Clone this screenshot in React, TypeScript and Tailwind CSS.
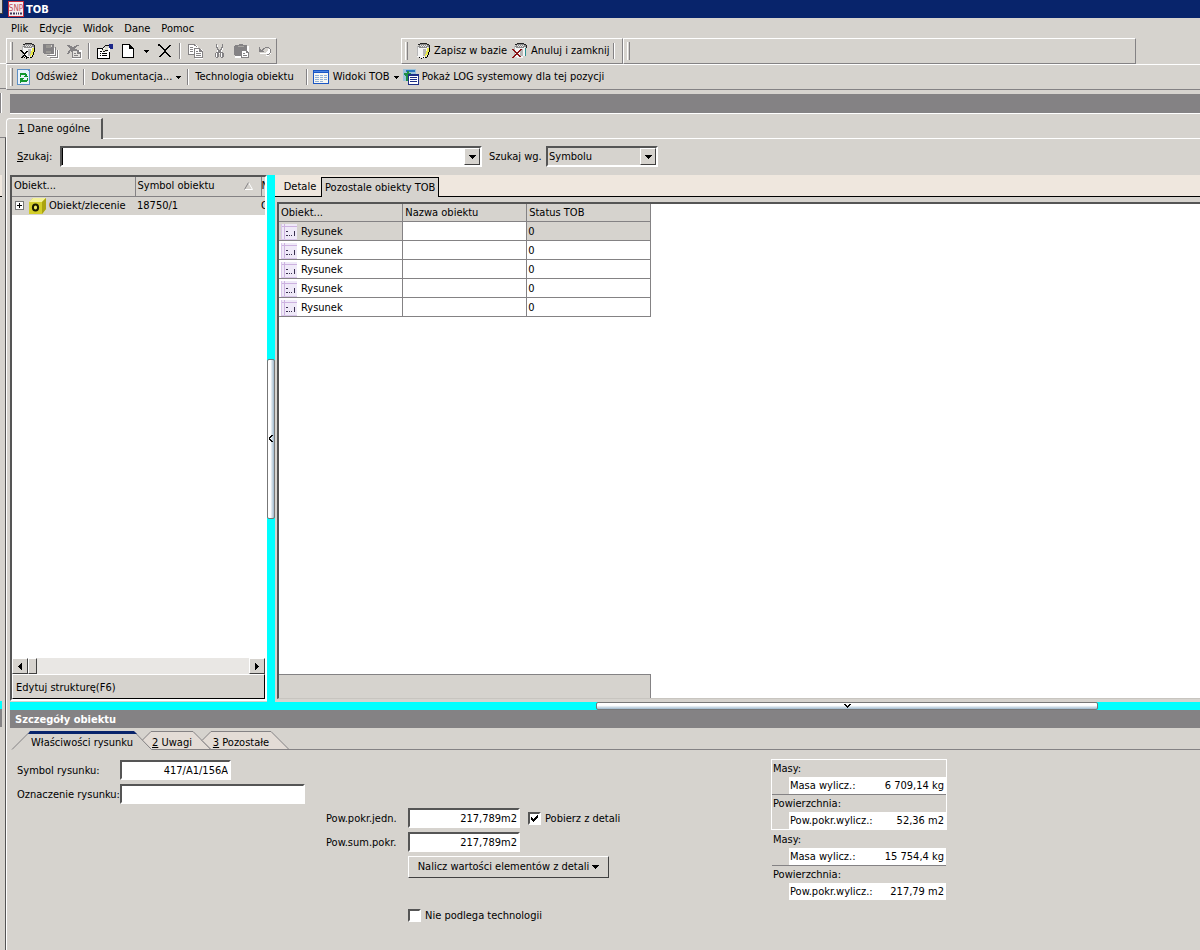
import { useState } from 'react';
import type { ReactNode } from 'react';

const MENU = ['Plik', 'Edycje', 'Widok', 'Dane', 'Pomoc'];
const ROWS = [1, 2, 3, 4, 5];

const GROUPS = [
    { mass: '6 709,14 kg', area: '52,36 m2', box: 'border-white' },
    { mass: '15 754,4 kg', area: '217,79 m2', box: 'border-transparent' },
];

const RAISED = 'border border-t-white border-l-white border-r-[#404040] border-b-[#404040] bg-[#d6d3ce]';
const SUNKEN = 'border-2 border-t-[#555] border-l-[#555] border-r-white border-b-white bg-white';

function Icon({ children, className = '' }: { children: ReactNode; className?: string }) {
    return (
        <svg width="16" height="16" viewBox="0 0 16 16" fill="none" shapeRendering="crispEdges" className={`shrink-0 ${className}`} aria-hidden="true">
            {children}
        </svg>
    );
}

function Arrow({ className = '' }: { className?: string }) {
    return (
        <svg width="7" height="4" viewBox="0 0 7 4" shapeRendering="crispEdges" className={`shrink-0 ${className}`} aria-hidden="true">
            <path d="M0 0h7v1H0zM1 1h5v1H1zM2 2h3v1H2zM3 3h1v1H3z" fill="#000" />
        </svg>
    );
}

function SmallArrow() {
    return (
        <svg width="5" height="3" viewBox="0 0 5 3" shapeRendering="crispEdges" className="shrink-0" aria-hidden="true">
            <path d="M0 0h5v1H0zM1 1h3v1H1zM2 2h1v1H2z" fill="#000" />
        </svg>
    );
}

/* database cylinder with a pencil */
function Cylinder() {
    return (
        <>
            <path d="M2 3h11v10h-2v2H5v-1H2z" fill="#f4f4f4" />
            <path d="M5 1h7v1h2v2h-2v1H4V4H2V3h2V2h1z" fill="#8a8a8a" />
            <path d="M5 2h1v1H5zM7 2h1v1H7zM9 2h1v1H9zM11 2h1v1h-1zM6 3h1v1H6zM8 3h1v1H8zM10 3h1v1h-1z" fill="#e8e8e8" />
            <path d="M5 0h7v1H5zM3 1h2v1H3zM12 1h2v1h-2zM14 2h1v3h-1z" fill="#222" />
            <path d="M2 3h1v10H2zM8 6h3v7H8z" fill="#b8b8b8" />
        </>
    );
}

function Pencil() {
    return (
        <>
            <path d="M12 5h2v4h-1v3h-2v2h-1v-3h1V8h1z" fill="#e8e84a" />
            <path d="M14 5h1v4h-1zM13 9h1v3h-1zM12 12h1v2h-1zM10 14h2v1h-2zM4 14h1v1H4zM6 15h1v1H6zM8 14h1v1H8z" fill="#000" />
        </>
    );
}

function Grip() {
    return <span className="mx-[3px] my-[3px] w-[3px] shrink-0 border-x border-l-white border-r-[#848284]" />;
}

function Separator({ className = '' }: { className?: string }) {
    return <span className={`my-1 w-[2px] shrink-0 border-l border-r border-l-[#848284] border-r-white ${className}`} />;
}

function ToolButton({ label, children, disabled }: { label: string; children: ReactNode; disabled?: boolean }) {
    return (
        <button type="button" aria-label={label} disabled={disabled} className="flex w-[23px] items-center justify-center">
            {children}
        </button>
    );
}

function MainToolbar() {
    return (
        <div className="flex h-[26px] items-stretch">
            <div className="flex border border-t-white border-l-white border-r-[#848284] border-b-[#848284]">
                <Grip />
                <ToolButton label="Zapisz">
                    <Icon>
                        <Cylinder />
                        <path d="M0 7h2v1h1v1h1v1h1V9h1V8h2v1H7v1H6v1H5v1h1v1h1v1h1v1H6v-1H5v-1H4v1H3v1H1v-1h1v-1h1v-1h1v-1H3v-1H2V9H1V8H0z" fill="#000" />
                        <Pencil />
                    </Icon>
                </ToolButton>
                <ToolButton label="Zapisz wszystko" disabled>
                    <Icon>
                        <path d="M7 5h6v9H4v-2h3zM12 7h4v9H8v-2h4z" fill="#fff" />
                        <path d="M0 1h11v10H1v-1H0z" fill="#848284" />
                        <path d="M3 2h5v3H3zM3 8h5v2H3z" fill="#9a9894" />
                        <path d="M8 2h1v2H8z" fill="#d6d3ce" />
                        <path d="M12 4h1v9H4v-1h8zM14 7h1v8H7v-1h7z" fill="#848284" />
                    </Icon>
                </ToolButton>
                <ToolButton label="Usuń zapis" disabled>
                    <Icon>
                        <path d="M6 7h10v9H6z" fill="#fff" />
                        <path d="M1 2h3v1h2v1h2V3h2V2h3v1h-2v1h-1v1H9v1h2v1h2v2h2v6H6V9H5V8H4v2H3v1H1v-1h1V8h1V7h1V5H3V4H2V3H1z" fill="#848284" />
                        <path d="M7 8h4v3h3v3H7z" fill="#e4e2de" />
                        <path d="M8 10h2v1H8zM8 12h4v1H8z" fill="#848284" />
                    </Icon>
                </ToolButton>
                <Separator className="mx-[3px]" />
                <ToolButton label="Właściwości">
                    <Icon>
                        <path d="M1 5h12v10H1z" fill="#fff" />
                        <path d="M0 5h6v1H1v9h11V9h1v7H0zM3 10h1v1H3zM3 12h1v1H3zM5 10h5v1H5zM5 12h5v1H5zM3 8h2v1H3z" fill="#000" />
                        <path d="M6 6h2V5h1V4h2v3h-1v2H7V8H5V7h1z" fill="#deded0" />
                        <path d="M8 2h4v1H8zM7 3h1v1H7zM6 4h1v1H6zM5 5h1v2H5zM6 8h2v1H6zM8 7h3v1H8z" fill="#111" />
                        <path d="M12 1h4v5h-3V5h-1z" fill="#1b2788" />
                    </Icon>
                </ToolButton>
                <ToolButton label="Nowy">
                    <Icon>
                        <path d="M3 2h7l3 3v10H3z" fill="#fff" />
                        <path d="M2 1h8v1h1v1h1v1h1v1h1v10H2zM3 2v12h10V6H9V2z" fill="#000" fillRule="evenodd" />
                    </Icon>
                </ToolButton>
                <button type="button" aria-label="Rodzaj nowego obiektu" className="flex w-[14px] items-center justify-center">
                    <SmallArrow />
                </button>
                <ToolButton label="Usuń">
                    <Icon>
                        <path d="M1 1h2v1h1v1h1v1h1v1h1v1h2V5h1V4h1V3h1V2h2v1h-1v1h-1v1h-1v1h-1v1H9v2h1v1h1v1h1v1h1v1h1v1h-2v-1h-1v-1h-1v-1H9v-1H7v1H6v1H5v1H4v1H2v-1h1v-1h1v-1h1v-1h1V9h1V7H6V6H5V5H4V4H3V3H1z" fill="#000" />
                    </Icon>
                </ToolButton>
                <Separator className="mx-[3px]" />
                <ToolButton label="Kopiuj" disabled>
                    <Icon>
                        <path d="M1 2h7l2 2v8H1zM7 6h6l2 2v8H7z" fill="#fff" />
                        <path d="M0 1h7v1h1v1h1v1H8V3H6V2H1v9h5v1H0zM6 5h6v1h1v1h1v1h1v7H6zM7 6v8h7V9h-3V6zM2 4h3v1H2zM2 6h3v1H2zM2 8h3v1H2zM8 8h2v1H8zM8 10h5v1H8zM8 12h5v1H8z" fill="#848284" fillRule="evenodd" />
                    </Icon>
                </ToolButton>
                <ToolButton label="Wytnij" disabled>
                    <Icon>
                        <path d="M6 2h1v4h1v2h2V6h1V2h1v5h-1v2h-1v1h2v1h1v3h-1v1h-2v-1H9v-3H8v3H7v1H5v-1H4v-3h1v-1h2V9H6z" fill="#fff" />
                        <path d="M5 1h1v3h1v2h1v1h1V6h1V4h1V1h1v4h-1v2h-1v2h2v1h1v4h-1v1h-2v-1H9v-4H8v4H7v1H5v-1H4v-4h1V9h2V7H6V5H5zM5 10v4h1v-4zM10 10v4h1v-4z" fill="#848284" fillRule="evenodd" />
                    </Icon>
                </ToolButton>
                <ToolButton label="Wklej" disabled>
                    <Icon>
                        <path d="M1 3h14v12H1z" fill="#fff" />
                        <path d="M5 1h4v1h4v11H1v-1H0V3h1V2h4z" fill="#848284" />
                        <path d="M4 3h6v1H4z" fill="#a8a6a2" />
                        <path d="M8 8h7v7H8z" fill="#fff" />
                        <path d="M7 7h6v1h1v1h1v6H7zM8 8v6h6v-4h-2V8zM9 10h2v1H9zM9 12h4v1H9z" fill="#848284" fillRule="evenodd" />
                    </Icon>
                </ToolButton>
                <ToolButton label="Cofnij" disabled>
                    <Icon>
                        <path d="M3 10h6V9h1V8h1V6h3v5h-2v2H9v-1h2v-1H3z" fill="#fff" />
                        <path d="M2 4h1v2h1v1h1V6h1V5h2V4h4v1h1v1h1v4h-1v1h-1v1h-2v-1h2v-1h1V6h-1V5H8v1H7v1H6v1h1v1H2z" fill="#848284" />
                    </Icon>
                </ToolButton>
            </div>

            <div className="ml-[124px] flex border border-t-white border-l-white border-r-[#848284] border-b-[#848284]">
                <Grip />
                <button type="button" className="ml-1 flex items-center gap-[3px]">
                    <Icon><Cylinder /><Pencil /></Icon>
                    Zapisz w bazie
                </button>
                <button type="button" className="ml-[5px] flex items-center gap-[3px]">
                    <Icon>
                        <Cylinder />
                        <path d="M13 5h1v8h-1z" fill="#2b8f8f" />
                        <path d="M0 6h2v1h1v1h1v1h2V8h1V7h1V6h2v1H9v1H8v1H7v1H6v1h1v1h1v1h1v1H7v-1H6v-1H4v1H3v1H2v1H0v-1h1v-1h1v-1h1v-1h1v-1H3V9H2V8H1V7H0z" fill="#8b1414" />
                    </Icon>
                    Anuluj i zamknij
                </button>
                <Separator className="mr-[7px] ml-[3px]" />
            </div>
            <div className="mr-[64px] flex flex-1 border border-t-white border-l-white border-r-[#848284] border-b-[#848284]">
                <Grip />
            </div>
        </div>
    );
}

function CommandToolbar() {
    return (
        <div className="flex h-[26px] items-stretch border-t border-b border-l border-t-white border-b-[#848284] border-l-white">
            <Grip />
            <button type="button" className="flex items-center gap-1">
                <Icon>
                    <path d="M1 0h13v16H1z" fill="#5c8fc4" />
                    <path d="M2 1h9l2 2v12H2z" fill="#e9f3fb" />
                    <path d="M4 4h6v1h1v2h1v1H8V7h1V6H5v2H4zM4 9h4v1H7v1h4V9h1v3h-1v1H5v1H4z" fill="#12972e" />
                </Icon>
                Odśwież
            </button>
            <Separator className="ml-[6px]" />
            <button type="button" className="ml-[6px] flex items-center gap-1">
                Dokumentacja...
                <SmallArrow />
            </button>
            <Separator className="ml-[6px]" />
            <button type="button" className="ml-[6px]">Technologia obiektu</button>
            <Separator className="ml-3" />
            <button type="button" className="ml-[5px] flex items-center gap-1">
                <Icon>
                    <path d="M0 1h16v14H0z" fill="#1b57c4" />
                    <path d="M1 4h14v10H1z" fill="#f7f7f2" />
                    <path d="M2 6h4v1H2zM7 6h3v1H7zM11 6h3v1h-3zM2 8h4v1H2zM7 8h3v1H7zM11 8h3v1h-3zM2 10h4v1H2zM7 10h3v1H7zM11 10h3v1h-3zM2 12h4v1H2zM7 12h3v1H7z" fill="#8fb0d8" />
                    <path d="M1 2h14v1H1z" fill="#4d86e4" />
                </Icon>
                Widoki TOB
                <SmallArrow />
            </button>
            <button type="button" className="ml-1 flex items-center gap-[3px]">
                <Icon>
                    <path d="M0 0h13v12H0z" fill="#9cc3dc" />
                    <path d="M3 1h9v2H3z" fill="#2a77c0" />
                    <path d="M1 4h3V2h2v2h2v1H7v1H6v1H5v5H3V7H2V6H1z" fill="#1f8f45" />
                    <path d="M5 5h11v11H5z" fill="#1d2f86" />
                    <path d="M6 7h9v8H6z" fill="#fff" />
                    <path d="M7 8h7v1H7zM7 10h7v1H7zM7 12h7v1H7z" fill="#1d2f86" />
                </Icon>
                Pokaż LOG systemowy dla tej pozycji
            </button>
        </div>
    );
}

function SearchBar() {
    return (
        <div className="flex items-center pt-[7px] pb-2 pl-[10px]">
            <label htmlFor="search" className="w-[43px]"><u>S</u>zukaj:</label>
            <div className={`flex h-[21px] w-[422px] ${SUNKEN}`}>
                <input id="search" type="text" className="min-w-0 flex-1 border-l border-l-black bg-white outline-none" />
                <button type="button" aria-label="Rozwiń listę" className={`flex w-4 items-center justify-center ${RAISED}`}>
                    <Arrow />
                </button>
            </div>
            <label htmlFor="search-by" className="ml-[7px] w-[57px]">Szukaj wg.</label>
            <div className="relative flex h-[21px] w-[112px] border-2 border-t-[#555] border-l-[#555] border-r-white border-b-white">
                <select id="search-by" className="w-full appearance-none bg-[#d6d3ce] pl-[1px] outline-none">
                    <option>Symbolu</option>
                </select>
                <span className={`pointer-events-none absolute inset-y-0 right-0 flex w-4 items-center justify-center ${RAISED}`}>
                    <Arrow />
                </span>
            </div>
        </div>
    );
}

function ObjectTree() {
    return (
        <section className="mb-[1px] flex w-[257px] shrink-0 flex-col border-2 border-t-[#555] border-l-[#555] border-r-white border-b-white bg-white">
            <div className="flex-1 overflow-hidden">
                <table className="w-full table-fixed border-collapse">
                    <thead>
                        <tr className="h-[19px] bg-[#d6d3ce] text-left">
                            <th className="w-[123px] border-r border-b border-[#848284] pl-[2px] font-normal">Obiekt...</th>
                            <th className="w-[126px] border-r border-b border-[#848284] pl-[2px] font-normal">
                                <div className="flex items-center justify-between pr-[8px]">
                                    Symbol obiektu
                                    <svg width="9" height="8" viewBox="0 0 9 8" aria-hidden="true">
                                        <path d="M4.500 0.500 8.500 7.500" stroke="#fff" />
                                        <path d="M0.500 7.500h8" stroke="#fff" />
                                        <path d="M4.500 0.500 0.500 7.500" stroke="#848284" />
                                    </svg>
                                </div>
                            </th>
                            <th className="overflow-hidden border-b border-[#848284] font-normal">N</th>
                        </tr>
                    </thead>
                    <tbody>
                        <tr className="h-[19px] bg-[#d6d3ce]">
                            <td>
                                <div className="flex items-center pl-[3px]">
                                    <button type="button" aria-label="Rozwiń obiekt" className="mr-[5px]">
                                        <svg width="9" height="9" viewBox="0 0 9 9" shapeRendering="crispEdges" className="block" aria-hidden="true">
                                            <path d="M0 0h9v9H0z" fill="#777" />
                                            <path d="M1 1h7v7H1z" fill="#fff" />
                                            <path d="M2 4h5v1H2zM4 2h1v5H4z" fill="#000" />
                                        </svg>
                                    </button>
                                    <svg width="17" height="16" viewBox="0 0 17 16" className="mr-[3px] shrink-0" aria-hidden="true">
                                        <path d="M0 4 4 0h13v11l-4 5H0z" fill="#d3ce2a" />
                                        <path d="M0 4 4 0h13l-4 4z" fill="#f4f19a" />
                                        <path d="M13 4l4-4v11l-4 5z" fill="#aaa312" />
                                        <ellipse cx="6.500" cy="9.500" rx="2.600" ry="3" stroke="#1c1c00" strokeWidth="2" fill="#f0ec60" />
                                    </svg>
                                    <span className="whitespace-nowrap">Obiekt/zlecenie</span>
                                </div>
                            </td>
                            <td className="pl-[2px]">18750/1</td>
                            <td className="overflow-hidden">O</td>
                        </tr>
                    </tbody>
                </table>
            </div>
            <div className="flex h-4 bg-[#e9e7e4]">
                <button type="button" aria-label="Przewiń w lewo" className={`flex w-4 items-center justify-center ${RAISED}`}>
                    <svg width="4" height="7" viewBox="0 0 4 7" shapeRendering="crispEdges" aria-hidden="true"><path d="M3 0h1v7H3zM2 1h1v5H2zM1 2h1v3H1zM0 3h1v1H0z" fill="#000" /></svg>
                </button>
                <span className={`w-[9px] ${RAISED}`} />
                <span className="flex-1" />
                <button type="button" aria-label="Przewiń w prawo" className={`flex w-4 items-center justify-center ${RAISED}`}>
                    <svg width="4" height="7" viewBox="0 0 4 7" shapeRendering="crispEdges" aria-hidden="true"><path d="M0 0h1v7H0zM1 1h1v5H1zM2 2h1v3H2zM3 3h1v1H3z" fill="#000" /></svg>
                </button>
            </div>
            <button type="button" className="h-[25px] border border-t-white border-l-white border-r-black border-b-black bg-[#d6d3ce] pt-[3px] pl-[3px] text-left">
                Edytuj strukturę(F6)
            </button>
        </section>
    );
}

function DrawingIcon() {
    return (
        <Icon>
            <path d="M0 0h16v16H0z" fill="#efe9f8" />
            <path d="M0 2h16v1H0zM3 0h1v16H3z" fill="#cdb2e0" />
            <path d="M0 15h16v1H0zM0 0h1v16H0z" fill="#d9c6ea" />
            <path d="M5 7h2v1H5zM5 11h2v1H5zM8 11h1v1H8zM10 11h1v1h-1zM13 7h1v5h-1z" fill="#3a3050" />
        </Icon>
    );
}

function ObjectsPanel() {
    return (
        <section className="flex min-w-0 flex-1 flex-col">
            <div className="flex h-[22px] items-end bg-[#efe7de]" role="tablist">
                <button type="button" role="tab" aria-selected="false" className="h-[20px] w-[46px] border-b border-black pt-[1px] pl-1 text-center">Detale</button>
                <button type="button" role="tab" aria-selected="true" className="h-[20px] border-t border-r border-l border-black bg-[#d6d3ce] px-[3px] whitespace-nowrap">Pozostale obiekty TOB</button>
                <span className="flex-1 self-stretch border-b border-black" />
            </div>
            <div className="mt-[5px] mb-[3px] ml-[2px] flex flex-1 flex-col border-t-2 border-l-2 border-b border-t-[#555] border-l-[#555] border-b-[#c8c5c0] bg-white">
                <div className="flex-1">
                    <table className="w-[372px] table-fixed border-collapse">
                        <thead>
                            <tr className="h-[17px] bg-[#d6d3ce] text-left">
                                <th className="border-r border-b border-[#848284] pt-[1px] pl-[2px] font-normal">Obiekt...</th>
                                <th className="border-r border-b border-[#848284] pt-[1px] pl-[2px] font-normal">Nazwa obiektu</th>
                                <th className="border-r border-b border-[#848284] pt-[1px] pl-[2px] font-normal">Status TOB</th>
                            </tr>
                        </thead>
                        <tbody>
                            {ROWS.map((row) => (
                                <tr key={row} className="h-[19px] first:bg-[#d6d3ce]">
                                    <td className="border-r border-b border-[#848284] pt-[2px]">
                                        <div className="flex items-center gap-1 pl-[2px]">
                                            <DrawingIcon />
                                            Rysunek
                                        </div>
                                    </td>
                                    <td className="border-r border-b border-[#848284] bg-white" />
                                    <td className="border-r border-b border-[#848284] pt-[2px] pl-[1px]">0</td>
                                </tr>
                            ))}
                        </tbody>
                    </table>
                </div>
                <div className="h-6 w-[372px] border-t border-r border-[#848284] bg-[#d6d3ce]" />
            </div>
        </section>
    );
}

function Checkbox({ id, label, defaultChecked }: { id: string; label: string; defaultChecked?: boolean }) {
    return (
        <div className="flex items-center">
            <span className="relative flex">
                <input id={id} type="checkbox" defaultChecked={defaultChecked} className={`peer size-[13px] appearance-none ${SUNKEN}`} />
                <svg width="7" height="7" viewBox="0 0 7 7" shapeRendering="crispEdges" className="pointer-events-none absolute top-[3px] left-[3px] hidden peer-checked:block" aria-hidden="true">
                    <path d="M0 2h1v1h1v1h1V3h1V2h1V1h1V0h1v3H6v1H5v1H4v1H3v1H2V6H1V5H0z" fill="#000" />
                </svg>
            </span>
            <label htmlFor={id} className="ml-1 pt-[1px]">{label}</label>
        </div>
    );
}

function Field({ id, label, value, labelWidth, width }: { id: string; label: string; value: string; labelWidth: string; width: string }) {
    return (
        <div className="flex h-[20px] items-center">
            <label htmlFor={id} className={`shrink-0 pt-[1px] whitespace-nowrap ${labelWidth}`}>{label}</label>
            <input id={id} type="text" defaultValue={value} className={`h-[20px] px-[1px] text-right outline-none ${width} ${SUNKEN}`} />
        </div>
    );
}

function DetailTabs() {
    const [active, setActive] = useState(0);
    return (
        <div className="flex h-[19px] pl-[5px]" role="tablist">
            <button type="button" role="tab" aria-selected={active === 0} onClick={() => setActive(0)} className="relative z-10 w-[130px] pt-1 pl-[10px]">
                <svg width="140" height="19" viewBox="0 0 140 19" className="absolute top-0 left-0 overflow-visible" aria-hidden="true">
                    <path d="M0 19 17 1H123L140 19z" fill="#d6d3ce" />
                    <path d="M0 18.500 17 1.500M123 1.500 139.500 18.500" stroke="#848284" />
                    <path d="M18 0h104l3 3H16z" fill="#08246b" />
                </svg>
                <span className="relative whitespace-nowrap">Właściwości rysunku</span>
            </button>
            <button type="button" role="tab" aria-selected={active === 1} onClick={() => setActive(1)} className="relative w-[60px] pt-1">
                <svg width="70" height="19" viewBox="0 0 70 19" className="absolute top-0 left-0 overflow-visible" aria-hidden="true">
                    <path d="M0 9.500 9 0.500H51L69 18.500H9z" fill="#e3dcd6" stroke="#848284" />
                </svg>
                <span className="relative"><u>2</u> Uwagi</span>
            </button>
            <button type="button" role="tab" aria-selected={active === 2} onClick={() => setActive(2)} className="relative w-[87px] pt-1 pr-[9px]">
                <svg width="87" height="19" viewBox="0 0 87 19" className="absolute top-0 left-0 overflow-visible" aria-hidden="true">
                    <path d="M0 9.500 9 0.500H69L87 18.500H9z" fill="#e3dcd6" stroke="#848284" />
                </svg>
                <span className="relative"><u>3</u> Pozostałe</span>
            </button>
            <span className="flex-1 border-b border-[#848284]" />
        </div>
    );
}

function Totals() {
    return (
        <div className="w-[176px]">
            {GROUPS.map((g) => (
                <dl key={g.mass} className={`border leading-[17px] ${g.box}`}>
                    <dt className="pl-[1px]">Masy:</dt>
                    <dd className="ml-[17px] flex justify-between bg-white px-[1px]">
                        <span>Masa wylicz.:</span>
                        <span className="pr-[1px]">{g.mass}</span>
                    </dd>
                    <dt className="border-t border-[#848284] pl-[1px]">Powierzchnia:</dt>
                    <dd className="ml-[17px] flex justify-between bg-white px-[1px]">
                        <span>Pow.pokr.wylicz.:</span>
                        <span className="pr-[1px]">{g.area}</span>
                    </dd>
                </dl>
            ))}
        </div>
    );
}

function Details() {
    return (
        <section className="pb-[27px]">
            <div className="mb-[3px] ml-[3px] flex h-[18px] items-center bg-[#848284] pt-[1px] pl-[5px] font-bold text-white">
                <h2>Szczegóły obiektu</h2>
            </div>
            <DetailTabs />
            <div className="flex pt-[9px] pl-[10px]">
                <div className="flex w-[309px] flex-col gap-1 pt-[1px]">
                    <Field id="symbol" label="Symbol rysunku:" value="417/A1/156A" labelWidth="w-[103px]" width="w-[111px]" />
                    <Field id="marking" label="Oznaczenie rysunku:" value="" labelWidth="w-[103px]" width="w-[185px]" />
                </div>
                <div className="flex w-[445px] flex-col items-start gap-1 pt-[49px]">
                    <div className="flex gap-2">
                        <Field id="unit-area" label="Pow.pokr.jedn." value="217,789m2" labelWidth="w-[82px]" width="w-[112px]" />
                        <Checkbox id="from-details" label="Pobierz z detali" defaultChecked />
                    </div>
                    <Field id="total-area" label="Pow.sum.pokr." value="217,789m2" labelWidth="w-[82px]" width="w-[112px]" />
                    <button type="button" className={`ml-[82px] flex h-[22px] w-[201px] items-center justify-center gap-[3px] ${RAISED}`}>
                        Nalicz wartości elementów z detali
                        <Arrow />
                    </button>
                    <div className="mt-[26px] ml-[82px]">
                        <Checkbox id="no-technology" label="Nie podlega technologii" />
                    </div>
                </div>
                <Totals />
            </div>
        </section>
    );
}

/* edge of the window lying behind this one */
function BackWindowEdge() {
    return (
        <div className="flex w-[6px] shrink-0 flex-col bg-[#d6d3ce]">
            <div className="h-[18px] bg-[#08246b]">
                <div className="h-[14px] w-[3px] border-r border-b border-[#404040] bg-[#d6d3ce]" />
            </div>
            <div className="h-[46px] border-b border-white" />
            <div className="h-[25px] border-b border-[#848284]" />
            <div className="mt-1 h-[20px] w-[2px] border-r border-white bg-[#848284]" />
            <div className="mt-6 flex flex-1 flex-col border-t border-r border-t-[#848284] border-r-[#555]">
                <div className="mt-[37px] h-[22px] w-[2px] border-b border-black bg-[#efe7de]" />
                <div className="flex-1" />
                <div className="h-2 w-[2px] bg-[#00ffff]" />
                <div className="mb-[223px] h-[18px] w-[2px] bg-[#848284]" />
            </div>
        </div>
    );
}

export default function App() {
    return (
        <div className="flex min-h-screen bg-[#d6d3ce] font-['DejaVu_Sans_Condensed','DejaVu_Sans',sans-serif] text-[11px] leading-[14px] text-black">
            <BackWindowEdge />
            <div className="flex min-w-0 flex-1 flex-col">
                <header className="flex h-[18px] items-center gap-[2px] bg-[#08246b] pl-[2px] font-bold text-white">
                    <svg width="16" height="16" viewBox="0 0 16 16" aria-hidden="true">
                        <path d="M0 0h16v16H0z" fill="#c22c3c" />
                        <path d="M1 1h14v14H1z" fill="#f5eef0" />
                        <text x="8" y="10" textAnchor="middle" fontSize="8" fontWeight="400" fontFamily="DejaVu Sans Condensed" fill="#c0505e">SNP</text>
                        <path d="M2 12.500h2M5 12.500h2M8 12.500h1M10 12.500h1M12 12.500h2" stroke="#3a3458" strokeWidth="2" />
                    </svg>
                    <h1 className="pt-[1px]">TOB</h1>
                </header>
                <nav className="flex h-[20px] items-center gap-[11px] pt-[2px] pl-[5px]">
                    {MENU.map((item) => (
                        <button key={item} type="button">{item}</button>
                    ))}
                </nav>
                <MainToolbar />
                <CommandToolbar />
                <div className="mt-1 ml-1 h-[20px] border-b border-white bg-[#848284]" />

                <div className="mt-1 flex h-[21px]" role="tablist">
                    <button type="button" role="tab" aria-selected="true" className="w-[97px] rounded-tl-sm border-t border-r-2 border-l border-t-white border-r-[#555] border-l-white">
                        <u>1</u> Dane ogólne
                    </button>
                    <span className="flex-1 border-b border-white" />
                </div>
                <div className="flex flex-1 flex-col border-l border-white">
                    <SearchBar />
                    <main className="flex min-h-[300px] flex-1 pl-[3px]">
                        <ObjectTree />
                        <div className="flex w-2 shrink-0 flex-col items-center justify-center bg-[#00ffff]">
                            <button type="button" aria-label="Zwiń drzewo" className="flex h-[160px] w-2 items-center justify-center rounded-xs border border-[#777] bg-linear-to-r from-white from-40% to-[#9db8cc]">
                                <svg width="4" height="7" viewBox="0 0 4 7" shapeRendering="crispEdges" className="shrink-0" aria-hidden="true"><path d="M2 0h2v1H3v1H2v1H1v1h1v1h1v1h1v1H2V6H1V5H0V2h1V1h1z" fill="#000" /></svg>
                            </button>
                        </div>
                        <ObjectsPanel />
                    </main>
                    <div className="ml-[3px] flex h-2 shrink-0 justify-end bg-[#00ffff]">
                        <button type="button" aria-label="Zwiń szczegóły" className="mr-[102px] flex h-2 w-[502px] items-center justify-center rounded-xs border border-[#777] bg-linear-to-b from-white from-40% to-[#9db8cc]">
                            <svg width="7" height="4" viewBox="0 0 7 4" shapeRendering="crispEdges" aria-hidden="true"><path d="M0 0h2v1h1v1h1V1h1V0h2v1H6v1H5v1H4v1H3V3H2V2H1V1H0z" fill="#000" /></svg>
                        </button>
                    </div>
                    <Details />
                </div>
            </div>
        </div>
    );
}
